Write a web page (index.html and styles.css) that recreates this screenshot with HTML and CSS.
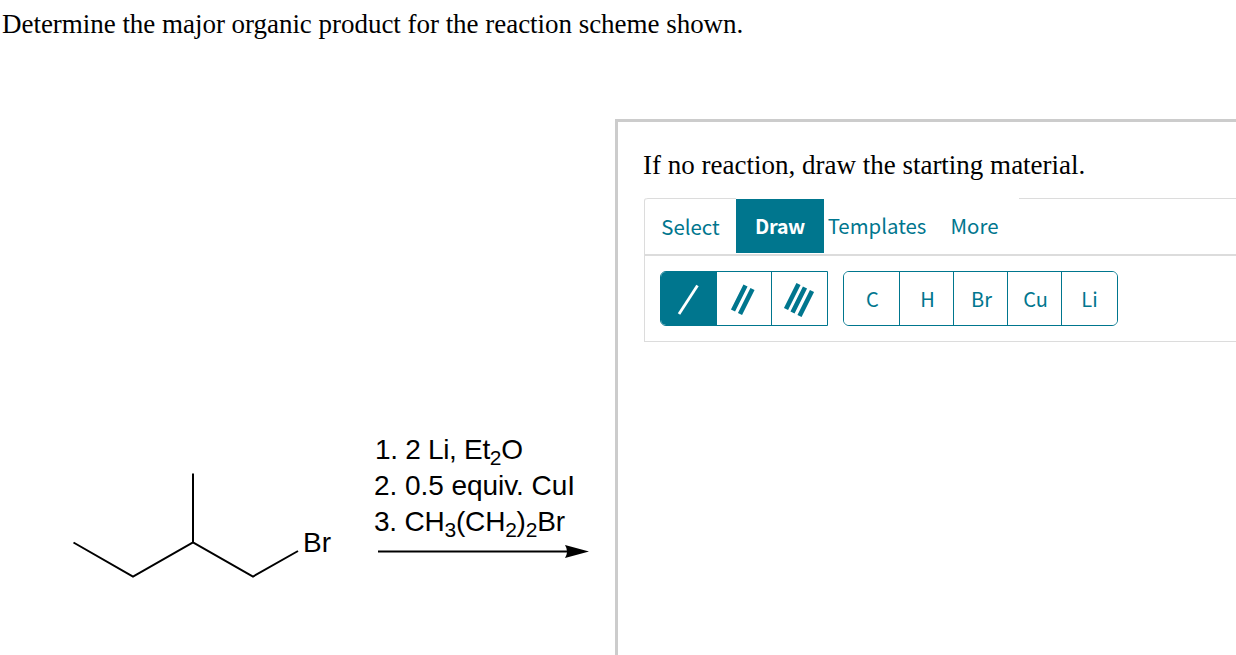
FILE: index.html
```html
<!doctype html>
<html lang="en">
<head>
    <meta charset="UTF-8">
    <title>Reaction scheme</title>
    <link rel="stylesheet" href="styles.css">
</head>

<body>
<h1 class="question">Determine the major organic product for the reaction scheme shown.</h1>

<main class="problem">
    <svg class="scheme" width="615" height="536" viewBox="0 119 615 536">
        <!-- 1-bromo-2-methylbutane -->
        <g class="bonds">
            <path d="M73.5 542.5 L133 576.5 L193 542.5 L253 576.5 L298 551"/>
            <path d="M193 473.5 V542.5"/>
        </g>
        <text x="303" y="552" textLength="28">Br</text>

        <text x="375" y="459" textLength="148">1. 2 Li, Et<tspan class="sub" dy="6">2</tspan><tspan dy="-6">O</tspan></text>
        <text x="374" y="495" textLength="201">2. 0.5 equiv. CuI</text>
        <text x="374" y="531" textLength="191">3. CH<tspan class="sub" dy="6">3</tspan><tspan dy="-6">(CH</tspan><tspan class="sub" dy="6">2</tspan><tspan dy="-6">)</tspan><tspan class="sub" dy="6">2</tspan><tspan dy="-6">Br</tspan></text>
        <path class="bonds" d="M378 551.5 H568"/>
        <path d="M589 551.5 L565 545 Q569 551.5 565 558 Z"/>
    </svg>

    <section class="answer">
        <p class="hint">If no reaction, draw the starting material.</p>

        <nav class="tabs">
            <a class="tab select">Select</a>
            <a class="tab draw">Draw</a>
            <a class="tab templates">Templates</a>
            <a class="tab more">More</a>
            <span class="rest"></span>
        </nav>

        <div class="toolbar">
            <div class="group bond-group">
                <button class="tool active"><svg width="56" height="54"><path d="M18 42 L36.5 13.5" stroke-width="2.8"/></svg></button>
                <button class="tool"><svg width="54" height="54"><path d="M16 38.5 L28.5 13.5 M23 42 L35.5 17" stroke-width="4.6"/></svg></button>
                <button class="tool"><svg width="54" height="54"><path d="M14 37 L26.5 12 M20.5 40.5 L33 15.5 M27.5 44 L40 19" stroke-width="4.6"/></svg></button>
            </div>
            <div class="group atom-group">
                <button class="tool">C</button>
                <button class="tool">H</button>
                <button class="tool">Br</button>
                <button class="tool">Cu</button>
                <button class="tool">Li</button>
            </div>
        </div>
    </section>
</main>
</body>
</html>
```

FILE: styles.css
```css
* {
    box-sizing: border-box;
}
body {
    margin: 0;
    height: 655px;
    overflow: hidden;
    background: #fff;
    color: #000;
    font-family: "Liberation Serif", serif;
}
.question {
    margin: 0;
    height: 119px;
    padding: 8px 0 0 2px;
    font-size: 27px;
    font-weight: normal;
    line-height: 32px;
    letter-spacing: -.03px;
    white-space: nowrap;
}
.problem {
    display: flex;
}
.scheme {
    flex: none;
    display: block;
    font-family: "Liberation Sans", sans-serif;
    font-size: 28px;
}
.scheme .sub {
    font-size: 21px;
}
.bonds {
    fill: none;
    stroke: #000;
    stroke-width: 2;
}
.answer {
    flex: 1;
    height: 536px;
    border: solid #ccc;
    border-width: 3px 0 0 3px;
    padding: 27px 0 0 26px;
}
.hint {
    margin: 0 0 0 -1px;
    height: 49px;
    font-size: 27px;
    line-height: 32px;
    white-space: nowrap;
}
.tabs {
    display: flex;
    height: 58px;
    border-left: 1px solid #dcdcdc;
    border-bottom: 2px solid #dcdcdc;
    border-top-left-radius: 3px;
    font-family: "Noto Sans CJK SC", sans-serif;
    font-size: 20.4px;
    line-height: 55px;
    color: #00768e;
}
.tab {
    text-align: center;
}
.select {
    width: 91px;
    border-top: 1px solid #dcdcdc;
    border-top-left-radius: 3px;
}
.draw {
    width: 88px;
    height: 54px;
    margin-top: 1px;
    background: #00768e;
    color: #fff;
    font-size: 20px;
    font-weight: bold;
    line-height: 53px;
    letter-spacing: -.4px;
}
.templates {
    width: 106px;
}
.more {
    width: 89px;
}
.rest {
    flex: 1;
    border-top: 1px solid #dcdcdc;
}
.toolbar {
    display: flex;
    gap: 15px;
    height: 86px;
    padding: 15px;
    border: solid #dcdcdc;
    border-width: 0 0 1px 1px;
}
.group {
    display: flex;
    height: 55px;
    border: 1px solid #00768e;
    border-radius: 6px;
    overflow: hidden;
}
.bond-group {
    width: 168px;
    border-radius: 6px 0 0 6px;
}
.atom-group {
    width: 275px;
}
.tool {
    flex: none;
    width: 54px;
    padding: 0 0 0 2px;
    border: 0;
    border-right: 1px solid #00768e;
    background: #fff;
    color: #00768e;
    font-family: "Noto Sans CJK SC", sans-serif;
    font-size: 20px;
}
.tool:first-child {
    width: 56px;
}
.tool:last-child {
    border-right: 0;
    width: 55px;
    padding: 0;
}
.bond-group .tool {
    padding: 0;
}
.bond-group .tool:nth-child(2) {
    width: 55px;
}
.tool.active {
    background: #00768e;
    color: #fff;
}
.tool svg {
    display: block;
    stroke: currentColor;
}
```
